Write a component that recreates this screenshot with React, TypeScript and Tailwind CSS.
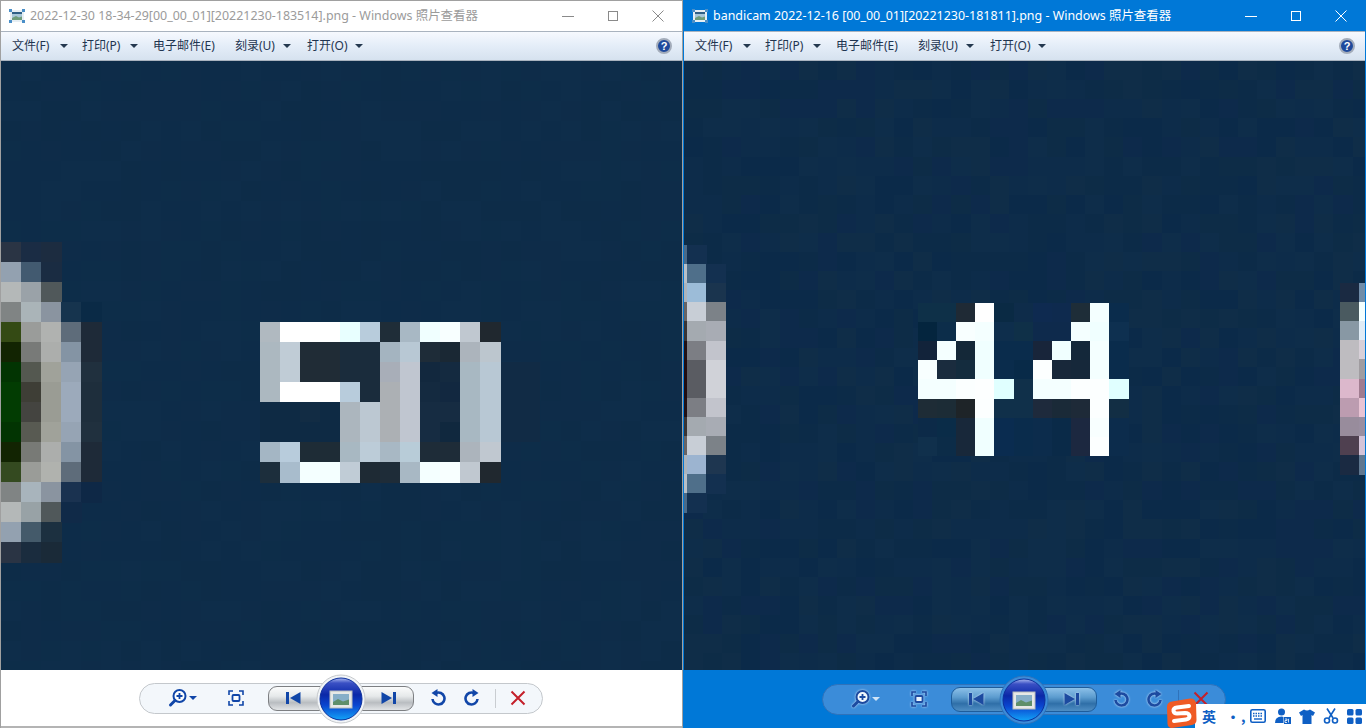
import type { ReactNode } from "react";

type Theme = "light" | "blue";

const menu = [
  { label: "文件(F)", arrow: true, w: "w-[70px]" },
  { label: "打印(P)", arrow: true, w: "w-[71px]" },
  { label: "电子邮件(E)", arrow: false, w: "w-[82px]" },
  { label: "刻录(U)", arrow: true, w: "w-[72px]" },
  { label: "打开(O)", arrow: true, w: "w-[70px]" },
];

// pixel blocks of the zoomed photo, one string per row
const leftBlob = [
  "2a3444 1a2c44 1c2c40",
  "93a1b0 425a70 1a2c42",
  "b4b8b8 9aa2a8 50585a",
  "808484 aab4b8 8a94a0 16344e 0a2a46",
  "344a14 9a9c9a b0b2b0 5e6c7a 1e2a38",
  "122402 787a78 acaeac 8494a4 1e2a38",
  "023402 545850 a0a29a 96a4b4 20303e",
  "023c02 3e3e36 9a9c94 9caabb 1e2e3c",
  "023c02 444440 9a9c94 9caabb 1e2e3c",
  "023402 585a52 a0a29a 96a4b4 20303e",
  "122402 787a76 acaeac 8494a4 1e2a38",
  "344a20 9a9c98 b0b2ae 5e6c7a 1e2a38",
  "808484 a8b4bc 8a94a0 1a3250 0e2846",
  "b4b8b8 98a2a6 50585a 102a48",
  "93a1b0 445a6a 1c3040",
  "2a3444 1a2c3e 1a2a38",
];

const fifty = [
  "b0b9c0 ffffff ffffff ffffff e8ffff b8ccdc 1f2d38 a8b8c4 f0ffff f8ffff c0c8d0 20282f",
  "acb8c0 c0ccd6 202c36 202c36 1a2c3c 1a2c3c a4b4c0 b8c8d4 1e2c38 1a2834 acb4bc bcc6ce",
  "acb8c0 c0ccd6 202c36 202c36 1a2c3c 1a2c3c a8aeb8 c0c6d0 12283e 142a40 a8b8c2 b8c8d4",
  "acb8c0 ffffff ffffff ffffff b8ccdc 1a2c3c acb0b4 c0c6d0 142a40 122840 a8b8c2 b8c8d4",
  "0e2a44 0e2a44 122c44 0e2a44 acb6be bcc8d2 acb0b4 c0c6d0 162c42 162c42 a8b8c2 b8c8d4",
  "0e2a44 0e2a44 0e2a44 0e2a44 acb6be bcc8d2 acb0b4 c0c6d0 162c42 10283e a8b8c2 b8c8d4",
  "a4b6c4 b8ccdc 1e2c36 1e2c36 a8b8c2 bcccd8 a8b8c4 b8ccd8 1e2c38 1e2c38 acb4bc c0c8d0",
  "1c2e3c a8bccc f4ffff f4ffff c0ccd6 1e2a34 1e2c38 a8b8c4 f4ffff f8ffff c0c8d0 20282f",
];

const rightBlob = [
  "4a6a88 133050",
  "b8c0c8 4f6f8a 133050",
  "acb4bc 9cbcd8 1a344e",
  "686464 c8ced6 7c8288",
  "383434 a4aab0 a8acb4",
  "201014 7c7e84 c2c4cc",
  "200c10 5a5c62 d0d2d8",
  "200c10 5a5c62 d0d2d8",
  "201014 7c7e84 c2c4cc",
  "383434 a4aab0 a8acb4",
  "686464 c8ced6 7c8288",
  "acb4bc 9cb4d0 1e3650",
  "b8c0c8 4f6f8a 133050",
  "4a6a88 133050",
];

const fortyFour = [
  "0e3048 0e3048 1f2a35 ffffff 0a2a44 0e2c4a 0e2a50 0e2a4e 1e2d38 f4ffff 0a2c4c",
  "04253e 0c2d4a f8ffff f4ffff 0e2e4c 0f3048 0e2a4c 0e2a4c f4ffff f0ffff 0e3050",
  "12233a f4ffff 142838 f0ffff 0a2c4c 0a2c4c 18253a f0ffff 14283a f4ffff 0a2c4c",
  "f8ffff 1a2c3e 142c3e f0ffff 0a2c4c 082a48 fcffff 18283a 16283a f4ffff 0a2c4c",
  "f4ffff f4ffff fbffff fdffff e0ffff 10304a f4ffff f4ffff fcffff fcffff e0ffff",
  "1e2c36 1c2c36 1e2428 fcffff 10304a 10304a 1e2a3c 1a2a38 1e2a38 fcffff 122e44",
  "0c2a48 0a2c48 18283a f0ffff 0a2c50 0a2c4c 0c2c4c 0a2a48 1c2840 f8ffff 0c2c4c",
  "10304c 0c2c48 18283a f0ffff 0a2c50 0a2c4c 0c2c4c 0a2a48 1c2840 fcffff 0c2c4c",
];

const rightEdge = [
  "1a2a42 708ca8",
  "4a5a60 f4ffff",
  "8898a4 e0ecf6",
  "bebcc0 d8d0d8",
  "bebcc0 a09ca0",
  "dcb8cc a07c90",
  "bc9cb0 e8c4d4",
  "988c9c 9a8ea0",
  "4f4050 d4c4d8",
  "1a2a42 607890",
];

function Pixels({ x, y, size, rows }: { x: number; y: number; size: number; rows: string[] }) {
  return (
    <>
      {rows.map((row, r) =>
        row
          .split(" ")
          .filter(Boolean)
          .map((c, i) => (
            <rect key={`${r}-${i}`} x={x + i * size} y={y + r * size} width={size + 0.5} height={size + 0.5} fill={`#${c}`} />
          )),
      )}
    </>
  );
}

// compression blocks in the dark background, small and deterministic
function Mottle({ x, y, size, cols, rowsN, palette }: { x: number; y: number; size: number; cols: number; rowsN: number; palette: string[] }) {
  const cells: ReactNode[] = [];
  for (let r = 0; r < rowsN; r++) {
    for (let c = 0; c < cols; c++) {
      const h = Math.abs(Math.sin(c * 12.9898 + r * 78.233) * 43758.5453) % 1;
      cells.push(
        <rect key={`${r}-${c}`} x={x + c * size} y={y + r * size} width={size + 0.5} height={size + 0.5} fill={palette[Math.floor(h * palette.length)]} />,
      );
    }
  }
  return <>{cells}</>;
}

function TitleIcon() {
  return (
    <svg width="16" height="16" viewBox="0 0 16 16" className="shrink-0">
      <rect x="1" y="2" width="14" height="12" fill="#e6eef3" />
      <rect x="0" y="1" width="3" height="3" fill="#4a8fc8" />
      <rect x="13" y="1" width="3" height="3" fill="#4a8fc8" />
      <rect x="0" y="12" width="3" height="3" fill="#4a8fc8" />
      <rect x="13" y="12" width="3" height="3" fill="#4a8fc8" />
      <rect x="3" y="4" width="10" height="8" fill="#a6c6d8" />
      <rect x="3" y="4" width="10" height="2" fill="#2f5f85" />
      <path d="M3 10 L7 8 L10 9.5 L13 8.5 V12 H3 Z" fill="#6e9c7a" />
    </svg>
  );
}

function WindowButtons({ color }: { color: string }) {
  return (
    <div className="ml-auto flex items-center">
      <svg width="14" height="14" viewBox="0 0 14 14" className="mr-[31px]">
        <path d="M1 7.5 H13" stroke={color} strokeWidth="1" />
      </svg>
      <svg width="14" height="14" viewBox="0 0 14 14" className="mr-[31px]">
        <rect x="2.5" y="2.5" width="9" height="9" fill="none" stroke={color} />
      </svg>
      <svg width="14" height="14" viewBox="0 0 14 14" className="mr-[17px]">
        <path d="M1.5 1.5 L12.5 12.5 M12.5 1.5 L1.5 12.5" stroke={color} strokeWidth="1" />
      </svg>
    </div>
  );
}

function MenuBar() {
  return (
    <div className="flex h-[30px] shrink-0 items-center border-y border-[#a9b3bf] bg-gradient-to-b from-[#f6f9fe] via-[#e4edf8] to-[#d6e2ef] pl-[11px] pr-[10px]">
      {menu.map((m) => (
        <div key={m.label} className={`flex items-center text-xs text-[#1f3550] ${m.w}`}>
          <span className="w-[48px] whitespace-nowrap">{m.label}</span>
          {m.arrow && <span className="h-0 w-0 border-x-[4px] border-t-[4px] border-x-transparent border-t-[#24384f]" />}
        </div>
      ))}
      <div className="ml-auto flex h-4 w-4 items-center justify-center rounded-full border-2 border-[#a3acba] bg-[#1f4a9c] font-['Liberation_Sans',sans-serif] text-[11px] font-bold leading-none text-white">
        ?
      </div>
    </div>
  );
}

function FooterBar({ theme }: { theme: Theme }) {
  const blue = theme === "blue";
  const ink = blue ? "#1c4aa0" : "#1146a8";
  const halo = blue ? "drop-shadow-[0_0_1px_#d3e7fa]" : "";
  const id = theme;
  return (
    <div className={`relative flex h-[58px] shrink-0 items-center justify-center ${blue ? "bg-[#0078d7]" : "border-b-2 border-[#b4b4b4] bg-white"}`}>
      <div
        className={`relative mr-[2px] flex h-[31px] w-[404px] items-center rounded-full border ${blue ? "border-[#2f72ba] bg-[#3b8cd9]" : "border-[#c4c8cc] bg-[#f3f7fb]"}`}
      >
        {/* zoom */}
        <svg width="20" height="20" viewBox="0 0 20 20" className={`ml-[28px] ${halo}`}>
          <circle cx="11.5" cy="8" r="6" fill="#fff" fillOpacity="0.8" stroke={ink} strokeWidth="2" />
          <path d="M8.5 8 H14.5 M11.5 5 V11" stroke={ink} strokeWidth="1.8" />
          <path d="M7 12.5 L2.5 17" stroke={ink} strokeWidth="3" strokeLinecap="round" />
        </svg>
        <span className={`ml-[1px] h-0 w-0 border-x-[4px] border-t-[4px] border-x-transparent ${blue ? "border-t-[#cfe4f8]" : "border-t-[#1146a8]"}`} />
        {/* actual size */}
        <svg width="16" height="16" viewBox="0 0 16 16" className={`ml-[31px] ${halo}`}>
          <path d="M1 5 V1 H5 M11 1 H15 V5 M15 11 V15 H11 M5 15 H1 V11" fill="none" stroke={ink} strokeWidth="1.6" />
          <rect x="4.5" y="5" width="7" height="6" rx="1" fill="#fff" fillOpacity="0.7" stroke={ink} strokeWidth="1.8" />
        </svg>
        {/* prev / next */}
        <div
          className={`ml-[24px] flex h-[25px] w-[146px] items-center justify-between rounded-[9px] border px-[17px] ${
            blue
              ? "border-[#1e5d9c] bg-[linear-gradient(180deg,#8cc0e8_0%,#5c9ccf_40%,#2f6fa8_68%,#4f8ec4_100%)]"
              : "border-[#7d7f82] bg-[linear-gradient(180deg,#fbfcfc_0%,#e6e9ea_40%,#b9bdc1_68%,#e2e4e6_100%)]"
          }`}
        >
          <svg width="15" height="14" viewBox="0 0 15 14" className={halo}>
            <rect x="0" y="1" width="3" height="12" fill={ink} />
            <path d="M14.5 1 V13 L4 7 Z" fill={ink} />
          </svg>
          <svg width="15" height="14" viewBox="0 0 15 14" className={halo}>
            <rect x="12" y="1" width="3" height="12" fill={ink} />
            <path d="M0.5 1 V13 L11 7 Z" fill={ink} />
          </svg>
        </div>
        {/* rotate */}
        <svg width="16" height="18" viewBox="0 0 16 18" className={`ml-[16px] ${halo}`}>
          <path d="M6 4 A6 6 0 1 1 2.5 10" fill="none" stroke={ink} strokeWidth="2.6" />
          <path d="M7.5 0 V8 L1.5 4 Z" fill={ink} />
        </svg>
        <svg width="16" height="18" viewBox="0 0 16 18" className={`ml-[18px] ${halo}`}>
          <path d="M10 4 A6 6 0 1 0 13.5 10" fill="none" stroke={ink} strokeWidth="2.6" />
          <path d="M8.5 0 V8 L14.5 4 Z" fill={ink} />
        </svg>
        <span className={`ml-[15px] h-[19px] w-px ${blue ? "bg-[#2f72ba]" : "bg-[#c9cdd1]"}`} />
        {/* delete */}
        <svg width="16" height="16" viewBox="0 0 16 16" className="ml-[14px]">
          <path d="M1.5 1.5 L14.5 14.5 M14.5 1.5 L1.5 14.5" stroke="#c4202a" strokeWidth="2" />
        </svg>
        {/* slideshow button, sits over the nav pill */}
        <svg width="50" height="50" viewBox="0 0 50 50" className="absolute left-[176px] top-[-10px]">
          <defs>
            <linearGradient id={`${id}-orb`} x1="0" y1="0" x2="0" y2="1">
              <stop offset="0" stopColor="#aab8f0" />
              <stop offset="0.12" stopColor="#3a50c4" />
              <stop offset="0.4" stopColor="#0a28a8" />
              <stop offset="0.65" stopColor="#0a46d0" />
              <stop offset="1" stopColor="#12a4f8" />
            </linearGradient>
          </defs>
          <circle cx="25" cy="25" r="24" fill={blue ? "#3b8cd9" : "#f2f5f8"} stroke={blue ? "#2f72ba" : "#c6c9cc"} />
          <circle cx="25" cy="25" r="21" fill={`url(#${id}-orb)`} stroke="#0b2f9c" />
          <rect x="14" y="17" width="22" height="17" fill="#e6e8e6" stroke="#b8bcbc" />
          <rect x="17" y="20" width="16" height="11" fill="#86aec8" />
          <path d="M17 28 L22 25 L27 27.5 L33 25.5 V31 H17 Z" fill="#5f8f6a" />
        </svg>
      </div>
    </div>
  );
}

function ImeBar() {
  return (
    <div className="absolute bottom-0 right-0 flex h-[24px] w-[171px] items-center bg-white pl-[7px] font-['Noto_Sans_CJK_SC',sans-serif]">
      <svg width="32" height="30" viewBox="0 0 32 30" className="absolute bottom-0 left-[-30px]">
        <path d="M2 9 Q2 4 7 3.5 L25 0.5 Q30 0 31 5 L31.5 22 Q31.5 26 27 27 L7 30 Q3 30 2.5 26 Z" fill="#ef5a24" />
        <path d="M24 8 L12 9.5 Q8 10 8.5 13 Q9 15.5 12 15.5 L20 15 Q24 15 24.5 18 Q24.5 21 21 21.5 L9 23" fill="none" stroke="#fff" strokeWidth="4" strokeLinecap="round" />
      </svg>
      <span className="w-[24px] text-sm font-bold leading-none text-[#0f5fc4]">英</span>
      <span className="w-[24px] text-sm font-bold leading-none tracking-[1px] text-[#0f5fc4]">•,</span>
      <svg width="16" height="14" viewBox="0 0 16 14" className="mr-[9px]">
        <rect x="0.8" y="0.8" width="14.4" height="12.4" rx="1.5" fill="none" stroke="#0f5fc4" strokeWidth="1.6" />
        <path d="M3 4.5 H13 M3 7 H13" stroke="#0f5fc4" strokeWidth="1.4" strokeDasharray="1.5 1" />
        <path d="M4 10 H12" stroke="#0f5fc4" strokeWidth="1.4" />
      </svg>
      <svg width="16" height="16" viewBox="0 0 16 16" className="mr-[8px]">
        <circle cx="6.5" cy="4" r="3.5" fill="#0f5fc4" />
        <path d="M0 15 Q0 8.5 6.5 8.5 Q8 8.5 8.5 9 V15 Z" fill="#0f5fc4" />
        <rect x="9" y="9" width="7" height="7" fill="#0f5fc4" />
        <path d="M10 11 H12 V12.5 H10 V14.5 H12 M13.5 10.8 V14.5" fill="none" stroke="#fff" strokeWidth="0.8" />
      </svg>
      <svg width="16" height="15" viewBox="0 0 16 15" className="mr-[8px]">
        <path d="M5 0.5 Q8 2.5 11 0.5 L16 3.5 L14 7 L12.5 6 V15 H3.5 V6 L2 7 L0 3.5 Z" fill="#0f5fc4" />
      </svg>
      <svg width="16" height="16" viewBox="0 0 16 16" className="mr-[8px]">
        <path d="M4 0.5 L10 10 M12 0.5 L6 10" stroke="#0f5fc4" strokeWidth="1.6" />
        <circle cx="4" cy="12.5" r="2.5" fill="none" stroke="#0f5fc4" strokeWidth="1.6" />
        <circle cx="12" cy="12.5" r="2.5" fill="none" stroke="#0f5fc4" strokeWidth="1.6" />
      </svg>
      <svg width="15" height="15" viewBox="0 0 15 15">
        <rect x="0" y="0" width="6.5" height="6.5" rx="1.5" fill="#0f5fc4" />
        <rect x="8.5" y="0" width="6.5" height="6.5" rx="1.5" fill="#0f5fc4" />
        <rect x="0" y="8.5" width="6.5" height="6.5" rx="1.5" fill="#0f5fc4" />
        <rect x="8.5" y="8.5" width="6.5" height="6.5" rx="1.5" fill="#0f5fc4" />
      </svg>
    </div>
  );
}

export default function App() {
  return (
    <div className="relative flex h-[728px] w-[1366px] overflow-hidden bg-white font-['Noto_Sans','Noto_Sans_CJK_SC',sans-serif]">
      {/* left window, inactive */}
      <div className="flex h-full w-[683px] flex-col border-x border-t border-[#a0a0a0]">
        <div className="flex h-[30px] shrink-0 items-center bg-white pl-[8px]">
          <TitleIcon />
          <span className="ml-[5px] whitespace-nowrap text-[12.45px] text-[#9b9b9b]">
            2022-12-30 18-34-29[00_00_01][20221230-183514].png - Windows 照片查看器
          </span>
          <WindowButtons color="#8a8a8a" />
        </div>
        <MenuBar />
        <svg viewBox="1 61 681 609" className="block min-h-0 w-full flex-1" shapeRendering="crispEdges" preserveAspectRatio="none">
          <rect x="1" y="61" width="681" height="609" fill="#0d2c49" />
          <Mottle x={1} y={61} size={20} cols={35} rowsN={31} palette={["#0d2c49", "#0d2c48", "#0e2c49", "#0d2d49", "#0e2d4a"]} />
          <rect x="500" y="362" width="40" height="80" fill="#112b45" />
          <Pixels x={1} y={242} size={20} rows={leftBlob} />
          <Pixels x={260} y={322} size={20} rows={fifty} />
        </svg>
        <FooterBar theme="light" />
      </div>

      {/* right window, active */}
      <div className="flex h-full w-[683px] flex-col border-x border-t border-[#0078d7]">
        <div className="flex h-[30px] shrink-0 items-center bg-[#0078d7] pl-[8px]">
          <TitleIcon />
          <span className="ml-[5px] whitespace-nowrap text-[12.45px] text-white">
            bandicam 2022-12-16 [00_00_01][20221230-181811].png - Windows 照片查看器
          </span>
          <WindowButtons color="#ffffff" />
        </div>
        <MenuBar />
        <svg viewBox="684 61 681 609" className="block min-h-0 w-full flex-1" shapeRendering="crispEdges" preserveAspectRatio="none">
          <rect x="684" y="61" width="681" height="609" fill="#0d2c4a" />
          <Mottle x={684} y={61} size={19.1} cols={36} rowsN={32} palette={["#0d2c4a", "#0c2b48", "#0e2d4a", "#0d2a4b", "#0f2d48", "#0b2a49", "#0d2c47"]} />
          <Pixels x={684} y={245} size={19.1} rows={rightBlob.map((r) => r.split(" ").slice(0, 1).join(" "))} />
          <Pixels x={687} y={245} size={19.1} rows={rightBlob.map((r) => r.split(" ").slice(1).join(" "))} />
          <Pixels x={918} y={303} size={19.1} rows={fortyFour} />
          <Pixels x={1340} y={283} size={19.1} rows={rightEdge} />
        </svg>
        <FooterBar theme="blue" />
      </div>

      <ImeBar />
    </div>
  );
}
